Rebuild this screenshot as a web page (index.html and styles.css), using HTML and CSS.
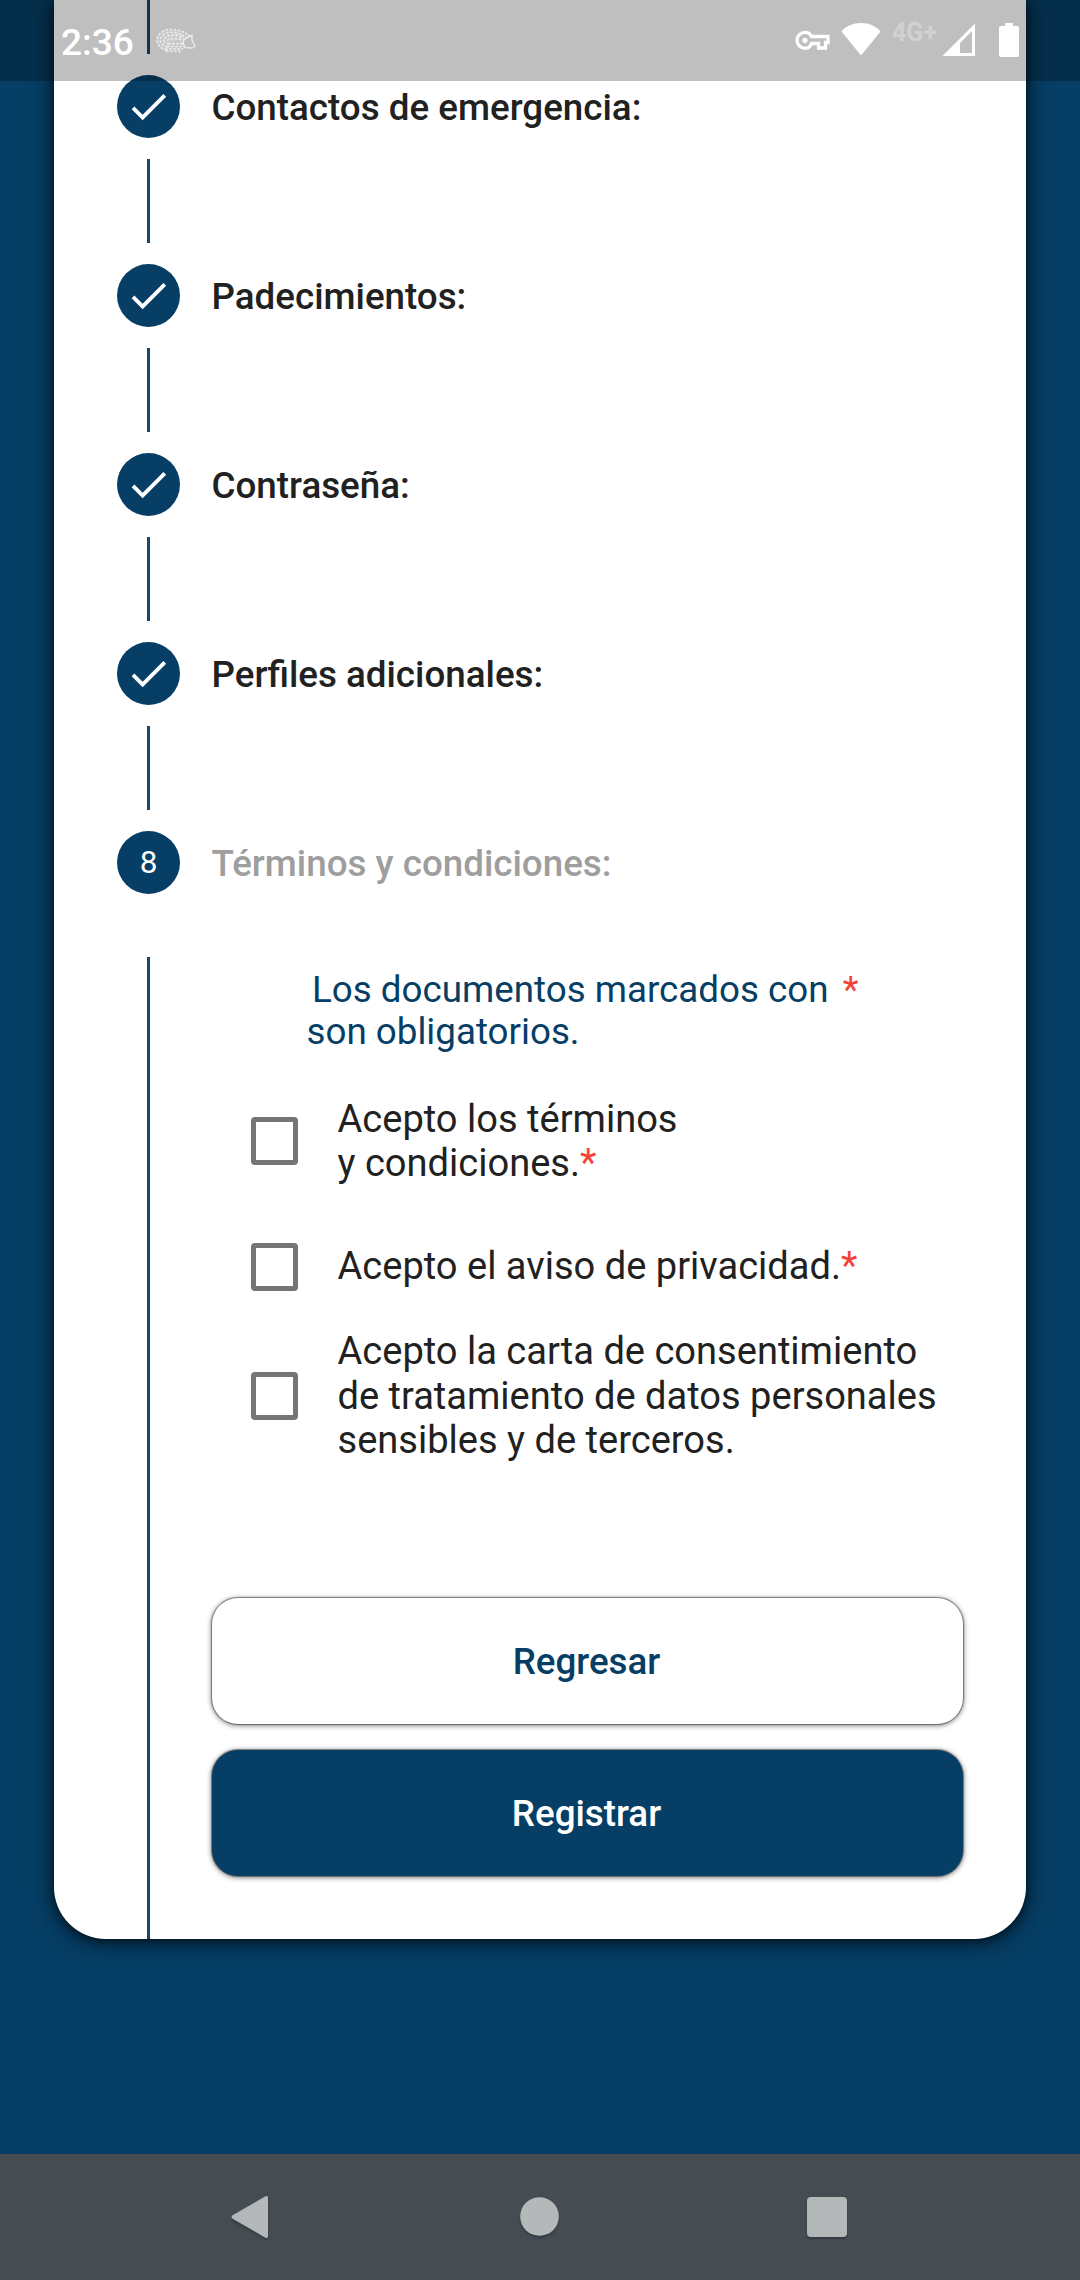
FILE: index.html
```html
<!DOCTYPE html>
<html lang="es">
<head>
<meta charset="utf-8">
<title>Registro</title>
<link rel="stylesheet" href="styles.css">
</head>
<body>
<div class="screen">
  <header class="statusbar">
    <span class="clock">2:36</span>
    <svg class="hedgehog" width="40" height="26" viewBox="0 0 40 26" fill="none" stroke="#fff" stroke-opacity=".65">
      <path fill="#fff" fill-opacity=".15" stroke="none" d="M11 23C4 21 0 16 1.500 10C3 4 10 1 16 1.500C23 1.500 31 5 35 9L28 12L28 22Z"/>
      <path stroke-width="1.700" stroke-dasharray="2.600 1.500" d="M11 22C4 21 0 16 1.500 10C3 4 10 1 16 1.500C23 1.500 29 4 34 8M12 19C7 18 3.500 15 4.500 11C6 6.500 11 4 16 4.300C21 4.300 25 6 30 9.500M13 16C9 15 6.500 13 8.500 10.500C11 7.500 16 7 20 7.300C23 7.500 26 9 28 11M11 12.500C14 10 19 10 26 12M11 18.500H27M12 15.700H27M9 21H27M10 23.300H26"/>
      <path stroke-width="1.500" d="M28 12L33 8.500L36 7.500L36 12L39 18L36 20L29 19.500L27 15Z"/>
    </svg>
    <div class="tray">
      <svg class="key" width="36" height="22" viewBox="0 0 36 22" fill="none" stroke="#fff" stroke-width="3.300"><path d="M16.500 6.500H33V12.500H30.500V18H23.500V13.500H16.500C15.500 16.500 13 18.300 10 18.300A8 8 0 0 1 10 2.300C13 2.300 15.500 4 16.500 6.500Z"/><circle cx="10" cy="10.300" r="2.600" fill="#fff" stroke="none"/></svg>
      <svg class="wifi" width="40" height="34" viewBox="0 0 40 34" fill="#fff"><path d="M20 33.500L.5 9.500C5 4 12 1 20 1S35 4 39.500 9.500Z"/></svg>
      <span class="net">4G+</span>
      <svg class="signal" width="34" height="34" viewBox="0 0 34 34" fill="#fff"><path fill-rule="evenodd" d="M33 .5V33H.5ZM30 8L18 20V30H30Z"/></svg>
      <svg class="battery" width="22" height="36" viewBox="0 0 22 36" fill="#fff"><path d="M7 1H15V4H19Q21 4 21 6V33Q21 35 19 35H3Q1 35 1 33V6Q1 4 3 4H7Z"/></svg>
    </div>
  </header>

  <main class="card">
    <div class="line line-first"></div>
    <div class="step"><span class="dot"><svg width="47" height="47" viewBox="0 0 24 24" fill="#fff"><path d="M9 16.200L4.800 12l-1.400 1.400L9 19 21 7l-1.400-1.400z"/></svg></span><h2>Contactos de emergencia:</h2></div>
    <div class="line"></div>
    <div class="step"><span class="dot"><svg width="47" height="47" viewBox="0 0 24 24" fill="#fff"><path d="M9 16.200L4.800 12l-1.400 1.400L9 19 21 7l-1.400-1.400z"/></svg></span><h2>Padecimientos:</h2></div>
    <div class="line"></div>
    <div class="step"><span class="dot"><svg width="47" height="47" viewBox="0 0 24 24" fill="#fff"><path d="M9 16.200L4.800 12l-1.400 1.400L9 19 21 7l-1.400-1.400z"/></svg></span><h2>Contraseña:</h2></div>
    <div class="line"></div>
    <div class="step"><span class="dot"><svg width="47" height="47" viewBox="0 0 24 24" fill="#fff"><path d="M9 16.200L4.800 12l-1.400 1.400L9 19 21 7l-1.400-1.400z"/></svg></span><h2>Perfiles adicionales:</h2></div>
    <div class="line"></div>
    <div class="step current"><span class="dot">8</span><h2>Términos y condiciones:</h2></div>

    <section class="content">
      <div class="rail"></div>
      <div class="form">
        <p class="hint"><span class="lead">Los documentos marcados con</span> <b class="req">*</b><br>son obligatorios.</p>
        <label class="option terms"><i class="box"></i><span>Acepto los términos<br>y condiciones.<b class="req">*</b></span></label>
        <label class="option privacy"><i class="box"></i><span>Acepto el aviso de privacidad.<b class="req">*</b></span></label>
        <label class="option consent"><i class="box"></i><span>Acepto la carta de consentimiento<br>de tratamiento de datos personales<br>sensibles y de terceros.</span></label>
        <div class="actions">
          <button class="btn">Regresar</button>
          <button class="btn primary">Registrar</button>
        </div>
      </div>
    </section>
  </main>

  <nav class="navbar">
    <svg width="42" height="48" viewBox="0 0 42 48" fill="#b4b8b9"><path d="M4 22Q1 24 4 26L36 44.500Q39 46 39 43V5Q39 2 36 3.500Z"/></svg>
    <svg width="42" height="48" viewBox="0 0 42 48" fill="#b4b8b9"><circle cx="21.500" cy="23.500" r="19.300"/></svg>
    <svg width="42" height="48" viewBox="0 0 42 48" fill="#b4b8b9"><rect x="1" y="4" width="40" height="40" rx="4"/></svg>
  </nav>
</div>
</body>
</html>
```

FILE: styles.css
```css
* { box-sizing: border-box; }
body {
  margin: 0;
  font-family: Roboto, "Liberation Sans", sans-serif;
  background: #063e65;
}
.screen {
  position: relative;
  width: 1080px;
  height: 2280px;
  overflow: hidden;
  display: flex;
  flex-direction: column;
}

/* system status bar, translucent over the scrolled card */
.statusbar {
  position: absolute;
  z-index: 2;
  inset: 0 0 auto 0;
  height: 81px;
  display: flex;
  align-items: flex-start;
  padding-left: 61px;
  background: rgba(0, 0, 0, .25);
  color: #fff;
}
.clock { font-size: 37px; font-weight: 500; line-height: 44px; margin-top: 21px; width: 95px; }
.hedgehog { margin-top: 28px; }
.tray { display: flex; margin-left: auto; padding-right: 60px; }
.key { margin: 30px 10px 0 0; }
.wifi { margin: 22px 11px 0 0; }
.net { font-size: 25px; font-weight: 700; line-height: 30px; margin-top: 18px; width: 50px; color: rgba(255, 255, 255, .3); }
.signal { margin-top: 23px; }
.battery { margin: 22px 0 0 22px; }

.card {
  width: 972px;
  height: 1938.5px;
  margin: 0 54px;
  background: #fff;
  border-radius: 0 0 52px 52px;
  box-shadow: 0 2px 8px rgba(0, 0, 0, .5), 0 2px 24px rgba(0, 0, 0, .6);
  overflow: hidden;
}
.line { width: 3px; height: 84px; margin: 21px 0 21px 93px; background: #17476c; }
.line-first { height: 54px; margin-top: 0; }
.step { height: 63px; display: flex; align-items: center; padding-left: 63px; gap: 31.500px; }
.dot {
  width: 63px; height: 63px;
  border-radius: 50%;
  display: grid;
  place-items: center;
  background: #063e65;
  color: #fff;
  font-size: 31.500px;
}
h2 { margin: 2px 0 0; font-size: 36.750px; font-weight: 500; line-height: 43px; color: #212121; }
.current h2 { color: #9e9e9e; }

.content { display: flex; margin-top: 63px; height: 982px; padding-left: 93px; }
.rail { width: 3px; background: #17476c; }
.form { width: 816px; padding-top: 12px; }
.hint { margin: 0; padding-left: 156.500px; font-size: 36.750px; line-height: 42px; color: #063e65; }
.lead { padding-left: 5.500px; }
.req { font-weight: 400; color: #f44336; }
.hint .req { margin-left: 5px; }
.option { display: flex; align-items: center; padding-left: 101px; gap: 39.500px; font-size: 38.060px; line-height: 44.500px; color: #212121; }
.box { width: 47px; height: 48px; border: 5px solid #757575; border-radius: 4px; flex: none; }
.terms { height: 89px; margin-top: 43px; line-height: 44px; }
.privacy { height: 48px; margin-top: 57.500px; }
.consent { height: 134px; margin-top: 38.500px; }
.actions { display: flex; flex-direction: column; gap: 26px; padding: 134.500px 0 0 61.500px; }
.btn {
  width: 751px;
  height: 126px;
  padding: 2px 1px 0 0;
  border: 0;
  border-radius: 26px;
  background: #fff;
  color: #063e65;
  font: 500 36.750px Roboto, sans-serif;
  box-shadow: 0 0 1px 1px rgba(0, 0, 0, .4), 0 1px 5px 1px rgba(0, 0, 0, .45);
}
.primary { background: #063e65; color: #fff; }

.navbar {
  height: 126px;
  margin-top: auto;
  display: flex;
  align-items: center;
  justify-content: space-between;
  padding: 0 232px 0 229px;
  background: #454d53;
}
.navbar svg { filter: drop-shadow(0 2px 1px rgba(0, 0, 0, .25)); }
```
